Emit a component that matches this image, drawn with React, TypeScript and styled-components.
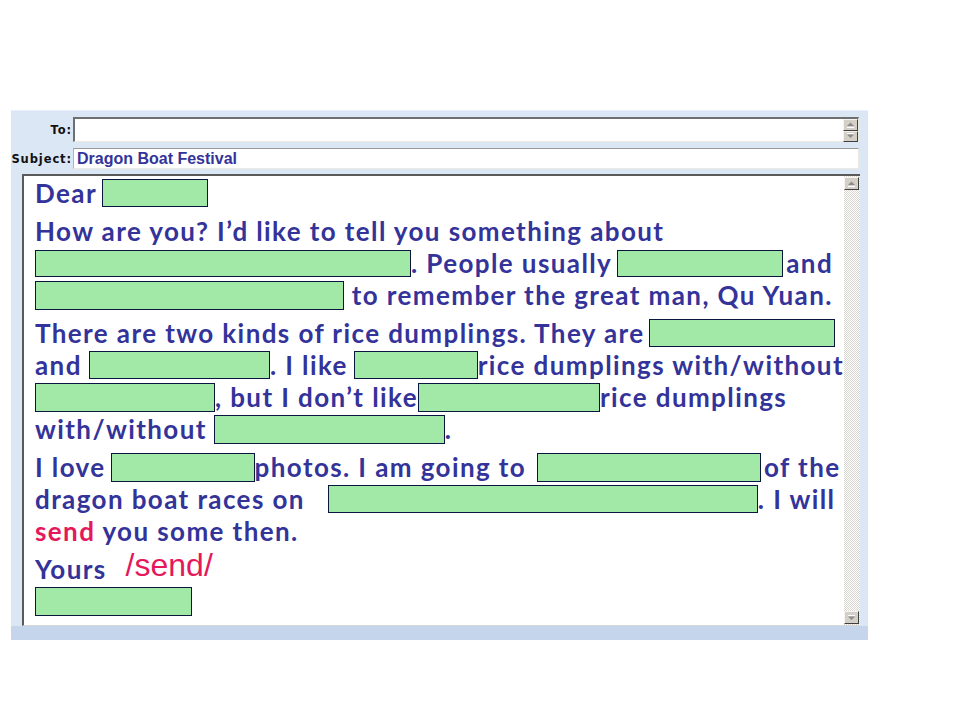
import styled, { createGlobalStyle } from "styled-components";

const GlobalStyle = createGlobalStyle`
  html, body {
    margin: 0;
    padding: 0;
    background: #ffffff;
  }
  body {
    font-family: "Liberation Sans", Arial, sans-serif;
  }
`;

const Page = styled.div`
  width: 960px;
  height: 720px;
  padding: 110px 0 0 11px;
  box-sizing: border-box;
`;

const Window = styled.div`
  width: 857px;
  background: #dce7f5;
  border-top: 1px solid #e9f0fa;
  display: flex;
  flex-direction: column;
`;

const Header = styled.div`
  padding: 6px 9px 0 0;
  display: flex;
  flex-direction: column;
  gap: 6px;
`;

const Field = styled.div`
  display: flex;
  align-items: center;
`;

const Label = styled.span`
  width: 61px;
  padding-right: 1px;
  text-align: right;
  font-family: "DejaVu Sans", Verdana, sans-serif;
  font-weight: bold;
  font-size: 11.5px;
  letter-spacing: 0.9px;
  color: #111;
`;

const Input = styled.div<{ $h: number; $sunken?: boolean }>`
  flex: 1;
  height: ${(p) => p.$h}px;
  box-sizing: border-box;
  background: #fff;
  display: flex;
  align-items: center;
  border: 1px solid #b4b4b4;
  border-top-color: ${(p) => (p.$sunken ? "#6f6f6f" : "#9a9a9a")};
  border-left-color: ${(p) => (p.$sunken ? "#6f6f6f" : "#b4b4b4")};
  border-top-width: ${(p) => (p.$sunken ? 2 : 1)}px;
  border-left-width: ${(p) => (p.$sunken ? 2 : 1)}px;
  border-right-color: #ece9e2;
  border-bottom-color: #ece9e2;
`;

const SubjectText = styled.span`
  flex: 1;
  padding-left: 3px;
  font-family: "Liberation Sans", Arial, sans-serif;
  font-weight: bold;
  font-size: 16px;
  color: #333399;
`;

const MiniScroll = styled.div`
  margin-left: auto;
  width: 15px;
  display: flex;
  flex-direction: column;
`;

const ScrollButton = styled.div<{ $h: number }>`
  width: 15px;
  height: ${(p) => p.$h}px;
  box-sizing: border-box;
  background: #d4d0c8;
  border: 1px solid;
  border-color: #f4f3ef #404040 #404040 #f4f3ef;
  display: flex;
  align-items: center;
  justify-content: center;
`;

const Body = styled.div`
  margin: 5px 8px 0 11px;
  height: 452px;
  box-sizing: border-box;
  background: #fff;
  border-top: 2px solid #5a5a5a;
  border-left: 2px solid #5a5a5a;
  border-bottom: 1px solid #d6d6d6;
  display: flex;
`;

const Letter = styled.div`
  flex: 1;
  min-width: 0;
  padding: 1px 0 0 11px;
  display: flex;
  flex-direction: column;
  gap: 6px;
  font-family: Lato, "Open Sans", sans-serif;
  font-weight: bold;
  font-size: 26px;
  letter-spacing: 1.4px;
  color: #333399;
`;

const Para = styled.div`
  display: flex;
  flex-direction: column;
`;

const Line = styled.div`
  height: 32px;
  display: flex;
  align-items: center;
  white-space: pre;
`;

const Words = styled.span<{ $ml?: number; $pink?: boolean }>`
  margin-left: ${(p) => p.$ml ?? 0}px;
  color: ${(p) => (p.$pink ? "#e5185c" : "inherit")};
`;

const Blank = styled.span<{ $w: number; $h?: number; $ml?: number }>`
  display: inline-block;
  margin-left: ${(p) => p.$ml ?? 0}px;
  width: ${(p) => p.$w}px;
  height: ${(p) => p.$h ?? 28}px;
  box-sizing: border-box;
  background: #a2e9a8;
  border: 1px solid #0a1640;
`;

const Phonetic = styled.span`
  margin-left: 19px;
  position: relative;
  top: -4px;
  font-family: "Liberation Sans", Arial, sans-serif;
  font-weight: normal;
  font-size: 32px;
  letter-spacing: 0;
  color: #e5185c;
`;

const Track = styled.div`
  width: 16px;
  display: flex;
  flex-direction: column;
  justify-content: space-between;
  padding: 1px 0 1px;
  background-color: #d9d6cf;
  background-image: linear-gradient(45deg, #fff 25%, transparent 25%, transparent 75%, #fff 75%),
    linear-gradient(45deg, #fff 25%, transparent 25%, transparent 75%, #fff 75%);
  background-size: 2px 2px;
  background-position: 0 0, 1px 1px;
`;

const BottomStrip = styled.div`
  height: 14px;
  background: #c4d5ec;
`;

function Arrow({ down }: { down?: boolean }) {
  return (
    <svg width="9" height="6" viewBox="0 0 9 6">
      {down ? (
        <>
          <path d="M1 0.5h7" stroke="#fff" strokeWidth="1" />
          <path d="M1 1.5h7L4.5 5z" fill="#8c8c8c" />
        </>
      ) : (
        <>
          <path d="M4.5 0.5L8 4H1z" fill="#8c8c8c" />
          <path d="M1 5.5h7" stroke="#fff" strokeWidth="1" />
        </>
      )}
    </svg>
  );
}

export default function App() {
  return (
    <Page>
      <GlobalStyle />
      <Window>
        <Header>
          <Field>
            <Label>To:</Label>
            <Input $h={25} $sunken>
              <MiniScroll>
                <ScrollButton $h={12}>
                  <Arrow />
                </ScrollButton>
                <ScrollButton $h={11}>
                  <Arrow down />
                </ScrollButton>
              </MiniScroll>
            </Input>
          </Field>
          <Field>
            <Label>Subject:</Label>
            <Input $h={21}>
              <SubjectText>Dragon Boat Festival</SubjectText>
            </Input>
          </Field>
        </Header>

        <Body>
          <Letter>
            <Para>
              <Line>
                <Words>Dear</Words>
                <Blank $w={106} $ml={5} />
              </Line>
            </Para>
            <Para>
              <Line>
                <Words>How are you? I’d like to tell you something about</Words>
              </Line>
              <Line>
                <Blank $w={376} $h={27} />
                <Words>. People usually</Words>
                <Blank $w={166} $h={27} $ml={5} />
                <Words $ml={3}>and</Words>
              </Line>
              <Line>
                <Blank $w={309} $h={29} />
                <Words> to remember the great man, Qu Yuan.</Words>
              </Line>
            </Para>
            <Para>
              <Line>
                <Words>There are two kinds of rice dumplings. They are</Words>
                <Blank $w={186} $ml={4} />
              </Line>
              <Line>
                <Words>and</Words>
                <Blank $w={187} $ml={7} />
                <Words>. I like</Words>
                <Blank $w={128} $ml={6} />
                <Words>rice dumplings with/without</Words>
              </Line>
              <Line>
                <Blank $w={180} $h={29} />
                <Words>, but I don’t like</Words>
                <Blank $w={182} $h={29} />
                <Words>rice dumplings</Words>
              </Line>
              <Line>
                <Words>with/without</Words>
                <Blank $w={231} $h={29} $ml={7} />
                <Words>.</Words>
              </Line>
            </Para>
            <Para>
              <Line>
                <Words>I love</Words>
                <Blank $w={144} $h={29} $ml={5} />
                <Words>photos. I am going to</Words>
                <Blank $w={224} $h={29} $ml={11} />
                <Words $ml={3}>of the</Words>
              </Line>
              <Line>
                <Words>dragon boat races on</Words>
                <Blank $w={430} $ml={23} />
                <Words>. I will</Words>
              </Line>
              <Line>
                <Words $pink>send</Words>
                <Words> you some then.</Words>
              </Line>
            </Para>
            <Para>
              <Line>
                <Words>Yours</Words>
                <Phonetic>/send/</Phonetic>
              </Line>
              <Line>
                <Blank $w={157} $h={29} />
              </Line>
            </Para>
          </Letter>
          <Track>
            <ScrollButton $h={13}>
              <Arrow />
            </ScrollButton>
            <ScrollButton $h={13}>
              <Arrow down />
            </ScrollButton>
          </Track>
        </Body>
        <BottomStrip />
      </Window>
    </Page>
  );
}
